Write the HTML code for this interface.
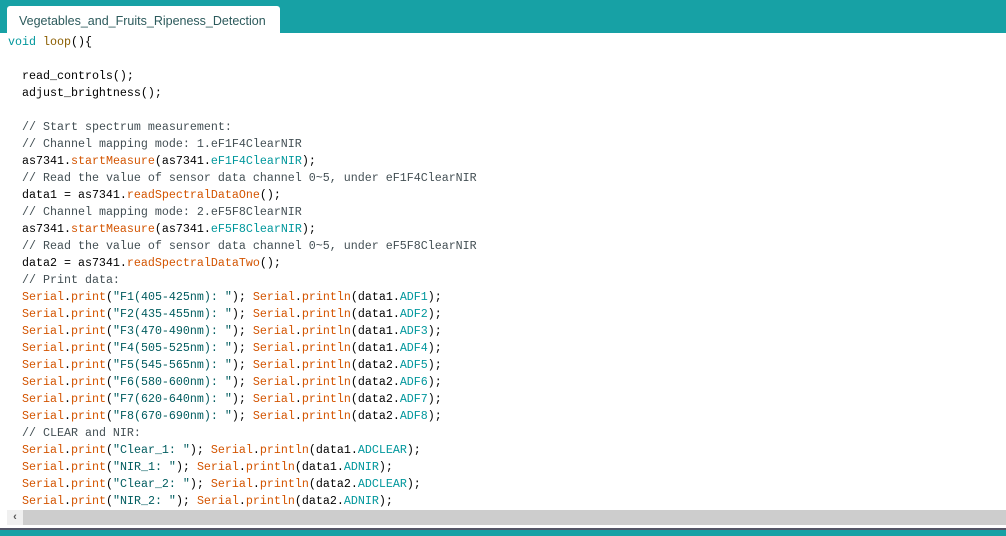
<!DOCTYPE html>
<html><head><style>
body{margin:0;width:1006px;height:536px;overflow:hidden;background:#fff;position:relative;font-family:"Liberation Sans",sans-serif}
#hdr{position:absolute;left:0;top:0;width:1006px;height:33px;background:#17a1a5}
#tab{position:absolute;left:7px;top:6px;width:273px;height:27px;background:#fff;border-radius:3px 3px 0 0;font-size:12.5px;color:#2c5a5c;line-height:30px;padding-left:12px;box-sizing:border-box}
pre{position:absolute;left:8px;top:34px;margin:0;font-family:"Liberation Mono",monospace;font-size:11.67px;line-height:17px;color:#000}
.k{color:#00979c}.f{color:#d35400}.c{color:#434f54}.s{color:#005c5f}.l{color:#8b5e00}
#sb{position:absolute;left:7px;top:510px;width:999px;height:15px;background:#cdcdcd}
#sbl{position:absolute;left:7px;top:510px;width:16px;height:15px;background:#f0f0f0;color:#555;font-size:11px;text-align:center;line-height:15px;font-weight:bold}
#bl{position:absolute;left:0;top:528px;width:1006px;height:2px;background:#556}
#bt{position:absolute;left:0;top:530px;width:1006px;height:6px;background:#17a1a5}
</style></head><body>
<div id="hdr"></div>
<div id="tab">Vegetables_and_Fruits_Ripeness_Detection</div>
<pre><span class="k">void</span> <span class="l">loop</span>(){

  read_controls();
  adjust_brightness();

  <span class="c">// Start spectrum measurement:</span>
  <span class="c">// Channel mapping mode: 1.eF1F4ClearNIR</span>
  as7341.<span class="f">startMeasure</span>(as7341.<span class="k">eF1F4ClearNIR</span>);
  <span class="c">// Read the value of sensor data channel 0~5, under eF1F4ClearNIR</span>
  data1 = as7341.<span class="f">readSpectralDataOne</span>();
  <span class="c">// Channel mapping mode: 2.eF5F8ClearNIR</span>
  as7341.<span class="f">startMeasure</span>(as7341.<span class="k">eF5F8ClearNIR</span>);
  <span class="c">// Read the value of sensor data channel 0~5, under eF5F8ClearNIR</span>
  data2 = as7341.<span class="f">readSpectralDataTwo</span>();
  <span class="c">// Print data:</span>
  <span class="f">Serial</span>.<span class="f">print</span>(<span class="s">"F1(405-425nm): "</span>); <span class="f">Serial</span>.<span class="f">println</span>(data1.<span class="k">ADF1</span>);
  <span class="f">Serial</span>.<span class="f">print</span>(<span class="s">"F2(435-455nm): "</span>); <span class="f">Serial</span>.<span class="f">println</span>(data1.<span class="k">ADF2</span>);
  <span class="f">Serial</span>.<span class="f">print</span>(<span class="s">"F3(470-490nm): "</span>); <span class="f">Serial</span>.<span class="f">println</span>(data1.<span class="k">ADF3</span>);
  <span class="f">Serial</span>.<span class="f">print</span>(<span class="s">"F4(505-525nm): "</span>); <span class="f">Serial</span>.<span class="f">println</span>(data1.<span class="k">ADF4</span>);
  <span class="f">Serial</span>.<span class="f">print</span>(<span class="s">"F5(545-565nm): "</span>); <span class="f">Serial</span>.<span class="f">println</span>(data2.<span class="k">ADF5</span>);
  <span class="f">Serial</span>.<span class="f">print</span>(<span class="s">"F6(580-600nm): "</span>); <span class="f">Serial</span>.<span class="f">println</span>(data2.<span class="k">ADF6</span>);
  <span class="f">Serial</span>.<span class="f">print</span>(<span class="s">"F7(620-640nm): "</span>); <span class="f">Serial</span>.<span class="f">println</span>(data2.<span class="k">ADF7</span>);
  <span class="f">Serial</span>.<span class="f">print</span>(<span class="s">"F8(670-690nm): "</span>); <span class="f">Serial</span>.<span class="f">println</span>(data2.<span class="k">ADF8</span>);
  <span class="c">// CLEAR and NIR:</span>
  <span class="f">Serial</span>.<span class="f">print</span>(<span class="s">"Clear_1: "</span>); <span class="f">Serial</span>.<span class="f">println</span>(data1.<span class="k">ADCLEAR</span>);
  <span class="f">Serial</span>.<span class="f">print</span>(<span class="s">"NIR_1: "</span>); <span class="f">Serial</span>.<span class="f">println</span>(data1.<span class="k">ADNIR</span>);
  <span class="f">Serial</span>.<span class="f">print</span>(<span class="s">"Clear_2: "</span>); <span class="f">Serial</span>.<span class="f">println</span>(data2.<span class="k">ADCLEAR</span>);
  <span class="f">Serial</span>.<span class="f">print</span>(<span class="s">"NIR_2: "</span>); <span class="f">Serial</span>.<span class="f">println</span>(data2.<span class="k">ADNIR</span>);</pre>
<div id="sb"></div>
<div id="sbl">&#8249;</div>
<div id="bl"></div>
<div id="bt"></div>
</body></html>
